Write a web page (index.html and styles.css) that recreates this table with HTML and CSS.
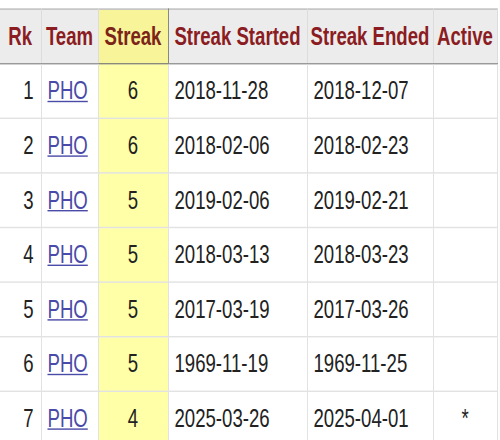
FILE: index.html
```html
<!DOCTYPE html>
<html lang="en">
<head>
<meta charset="utf-8">
<title>Streaks</title>
<link rel="stylesheet" href="styles.css">
</head>
<body>
<div class="stretch">
<table class="stats">
<colgroup><col class="c-rk"><col class="c-team"><col class="c-streak"><col class="c-start"><col class="c-end"><col class="c-active"></colgroup>
<thead>
<tr><th class="first">Rk</th><th>Team</th><th class="sort">Streak</th><th>Streak Started</th><th>Streak Ended</th><th>Active</th></tr>
</thead>
<tbody>
<tr><td class="first num">1</td><td><a href="#">PHO</a></td><td class="streak">6</td><td>2018-11-28</td><td>2018-12-07</td><td class="ctr"></td></tr>
<tr><td class="first num">2</td><td><a href="#">PHO</a></td><td class="streak">6</td><td>2018-02-06</td><td>2018-02-23</td><td class="ctr"></td></tr>
<tr><td class="first num">3</td><td><a href="#">PHO</a></td><td class="streak">5</td><td>2019-02-06</td><td>2019-02-21</td><td class="ctr"></td></tr>
<tr><td class="first num">4</td><td><a href="#">PHO</a></td><td class="streak">5</td><td>2018-03-13</td><td>2018-03-23</td><td class="ctr"></td></tr>
<tr><td class="first num">5</td><td><a href="#">PHO</a></td><td class="streak">5</td><td>2017-03-19</td><td>2017-03-26</td><td class="ctr"></td></tr>
<tr><td class="first num">6</td><td><a href="#">PHO</a></td><td class="streak">5</td><td>1969-11-19</td><td>1969-11-25</td><td class="ctr"></td></tr>
<tr><td class="first num">7</td><td><a href="#">PHO</a></td><td class="streak">4</td><td>2025-03-26</td><td>2025-04-01</td><td class="ctr">*</td></tr>
</tbody>
</table>
</div>
</body>
</html>
```
FILE: styles.css
```css
html, body {
  margin: 0;
  padding: 0;
  background: #ffffff;
}
body {
  width: 500px;
  height: 440px;
  overflow: hidden;
  font-family: "Liberation Sans", Arial, sans-serif;
}
.stretch {
  transform: scaleY(1.4);
  transform-origin: 0 0;
  padding-top: 6px;
}
.stats {
  border-collapse: collapse;
  table-layout: fixed;
  width: 497px;
  font-size: 18.6px;
  color: #222222;
}
.c-rk { width: 41px; }
.c-team { width: 57px; }
.c-streak { width: 70px; }
.c-start { width: 139px; }
.c-end { width: 126px; }
.c-active { width: 64px; }
.stats tr {
  height: 39px;
}
.stats th {
  background: #ececec;
  color: #8a1c22;
  font-weight: bold;
  text-align: center;
  padding: 0;
  border-top: 1px solid #b8b8b8;
  border-bottom: 1px solid #9a9a9a;
  border-left: 1px solid #dcdcdc;
  border-right: 1px solid #dcdcdc;
  white-space: nowrap;
}
.stats th.sort {
  background: #f7f49a;
  color: #7c2418;
  border-left: 1px solid #8a8a7a;
  border-right: 1px solid #8a8a7a;
  border-bottom: 1px solid #8a8a7a;
}
.stats td {
  padding: 0 6px;
  text-align: left;
  border: 1px solid #e2e2e2;
  white-space: nowrap;
}
.stats .first {
  border-left: none;
}
.stats td.num {
  text-align: right;
  padding-right: 7px;
}
.stats td.streak {
  background: #ffffa8;
  text-align: center;
  border-left: 1px solid #a8a8a0;
}
.stats td.ctr {
  text-align: center;
}
.stats a {
  color: #4a4aa8;
  text-decoration: underline;
}
```
